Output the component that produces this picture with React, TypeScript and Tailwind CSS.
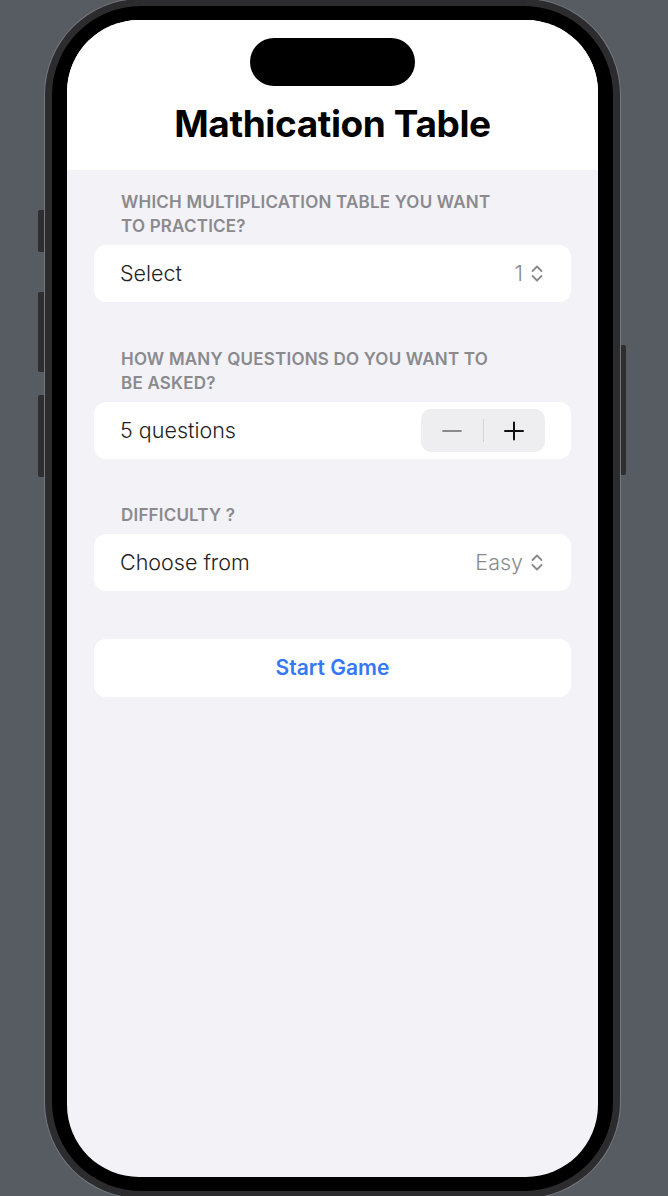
import { useState } from 'react'

const font = 'font-["Inter","Liberation_Sans",sans-serif]'

function Chevrons() {
  return (
    <svg width="12" height="19" viewBox="0 0 12 19" fill="none" className="shrink-0">
      <path d="M1.5 7 L6 2.5 L10.5 7" stroke="#8a8a8e" strokeWidth="1.8" strokeLinecap="round" strokeLinejoin="round" />
      <path d="M1.5 12 L6 16.5 L10.5 12" stroke="#8a8a8e" strokeWidth="1.8" strokeLinecap="round" strokeLinejoin="round" />
    </svg>
  )
}

function Label({ lines, className = '' }: { lines: string[]; className?: string }) {
  return (
    <div className={`px-[27px] text-[17px] leading-[24px] font-semibold text-[#8a8a8e] tracking-[0.2px] ${className}`}>
      {lines.map(l => (
        <div key={l}>{l}</div>
      ))}
    </div>
  )
}

function PickerRow({ label, value }: { label: string; value: string }) {
  return (
    <div className="h-[57px] rounded-[12px] bg-white flex items-center justify-between pl-[26px] pr-[28px]">
      <span className="text-[21.5px] font-light text-[#222224]">{label}</span>
      <span className="flex items-center gap-[8px] text-[21.5px] font-light text-[#8a8a8e]">
        {value}
        <Chevrons />
      </span>
    </div>
  )
}

export default function App() {
  const [count, setCount] = useState(5)

  return (
    <div className={`relative w-full h-[1196px] overflow-hidden bg-[#575b62] ${font}`}>
      {/* side buttons */}
      <div className="absolute left-[38px] top-[210px] w-[8px] h-[42px] rounded-l-[2px] bg-[#2e2e30]" />
      <div className="absolute left-[38px] top-[292px] w-[8px] h-[80px] rounded-l-[2px] bg-[#2e2e30]" />
      <div className="absolute left-[38px] top-[395px] w-[8px] h-[82px] rounded-l-[2px] bg-[#2e2e30]" />
      <div className="absolute left-[619px] top-[345px] w-[7px] h-[130px] rounded-r-[2px] bg-[#2e2e30]" />

      {/* phone */}
      <div className="absolute left-[45px] top-[-1px] w-[575px] rounded-[96px] bg-[#2c2c2e] p-[7px] ring-1 ring-[#75787d]">
        <div className="rounded-[89px] bg-black px-[15px] pt-[14px] pb-[14px]">
          <div className="h-[1157px] rounded-[72px] overflow-hidden bg-[#f2f2f7] flex flex-col">
            {/* header */}
            <div className="bg-white h-[150px] flex flex-col items-center">
              <div className="mt-[18px] w-[165px] h-[48px] rounded-full bg-black" />
              <h1 className="mt-[19px] text-[37px] leading-[38px] font-bold text-black tracking-[-0.4px]">
                Mathication Table
              </h1>
            </div>

            {/* form */}
            <div className="px-[27px] flex flex-col">
              <Label lines={['WHICH MULTIPLICATION TABLE YOU WANT', 'TO PRACTICE?']} className="mt-[20px]" />
              <div className="mt-[7px]">
                <PickerRow label="Select" value="1" />
              </div>

              <Label lines={['HOW MANY QUESTIONS DO YOU WANT TO', 'BE ASKED?']} className="mt-[45px]" />
              <div className="mt-[7px] h-[57px] rounded-[12px] bg-white flex items-center justify-between pl-[26px] pr-[26px]">
                <span className="text-[21.5px] font-light text-[#222224]">{count} questions</span>
                <div className="w-[124px] h-[43px] rounded-[10px] bg-[#eeeef0] flex items-center">
                  <button
                    className="flex-1 h-full flex items-center justify-center"
                    onClick={() => setCount(c => Math.max(1, c - 1))}
                  >
                    <svg width="20" height="20" viewBox="0 0 20 20">
                      <path d="M1 10 H19" stroke="#8a8a8e" strokeWidth="1.8" strokeLinecap="round" />
                    </svg>
                  </button>
                  <div className="w-px h-[23px] bg-[#d4d4d8]" />
                  <button
                    className="flex-1 h-full flex items-center justify-center"
                    onClick={() => setCount(c => c + 1)}
                  >
                    <svg width="20" height="20" viewBox="0 0 20 20">
                      <path d="M1 10 H19 M10 1.5 V18.5" stroke="#111" strokeWidth="2" strokeLinecap="round" />
                    </svg>
                  </button>
                </div>
              </div>

              <Label lines={['DIFFICULTY ?']} className="mt-[44px]" />
              <div className="mt-[7px]">
                <PickerRow label="Choose from" value="Easy" />
              </div>

              <button className="mt-[48px] h-[58px] rounded-[12px] bg-white flex items-center justify-center text-[21px] font-semibold text-[#3478f6]">
                Start Game
              </button>
            </div>
          </div>
        </div>
      </div>
    </div>
  )
}
